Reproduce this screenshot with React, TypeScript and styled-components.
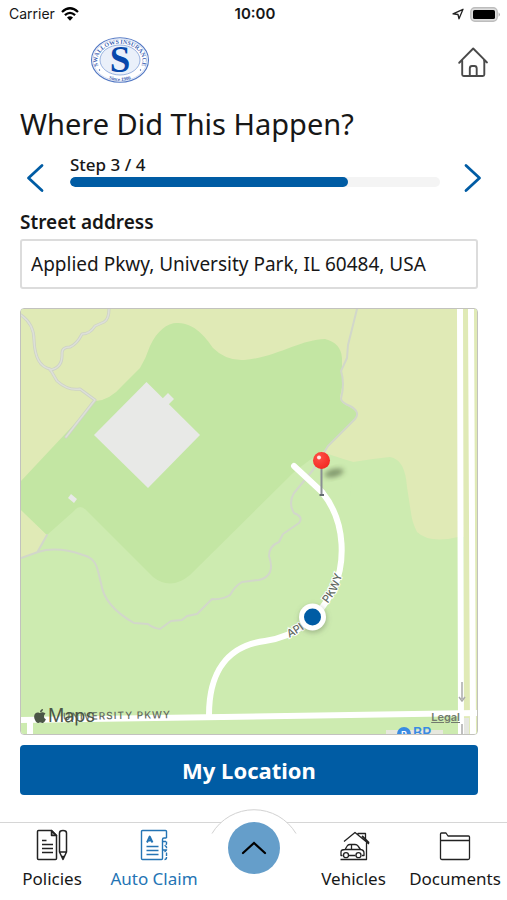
import React, { useState } from "react";
import styled, { createGlobalStyle } from "styled-components";
import { FaApple } from "react-icons/fa";

const BLUE = "#005ca4";
const INK = "#171717";

const GlobalStyle = createGlobalStyle`
  * { box-sizing: border-box; }
  body {
    margin: 0;
    background: #fff;
    color: ${INK};
    font-family: "Noto Sans", sans-serif;
  }
  button, input { font-family: inherit; color: inherit; }
  svg { display: block; }
`;

const Page = styled.div`
  display: flex;
  flex-direction: column;
  min-height: 100vh;
`;

const StatusBar = styled.div`
  display: grid;
  grid-template-columns: 1fr auto 1fr;
  align-items: center;
  height: 28px;
  padding: 0 6px 0 9px;
  font: 400 14px/20px Inter, sans-serif;
`;

const StatusSide = styled.div<{ $end?: boolean }>`
  display: flex;
  align-items: center;
  gap: 6px;
  justify-content: ${(p) => (p.$end ? "flex-end" : "flex-start")};
`;

const Clock = styled.span`
  font-size: 15px;
  font-weight: 600;
`;

const Header = styled.header`
  display: flex;
  align-items: center;
  justify-content: space-between;
  height: 68px;
  padding: 0 18px 4px 90px;
`;

const IconButton = styled.button`
  display: flex;
  padding: 0;
  border: 0;
  background: none;
  cursor: pointer;
`;

const Main = styled.main`
  display: flex;
  flex-direction: column;
  padding: 8px 29px 0 20px;
`;

const Title = styled.h1`
  margin: 0;
  font-size: 29px;
  font-weight: 400;
  line-height: 40px;
`;

const Stepper = styled.div`
  display: flex;
  align-items: center;
  justify-content: space-between;
  gap: 20px;
  height: 48px;
  margin: 10px -12px 0 0;
`;

const StepInfo = styled.div`
  display: flex;
  flex: 1;
  flex-direction: column;
  margin-bottom: 16px;
`;

const StepLabel = styled.span`
  font-size: 17px;
  font-weight: 500;
  line-height: 24px;
`;

const Track = styled.div`
  height: 10px;
  border-radius: 5px;
  background: #f4f4f4;
  overflow: hidden;
`;

const Fill = styled.div`
  height: 100%;
  border-radius: 5px;
  background: ${BLUE};
`;

const FieldLabel = styled.label`
  margin-top: 5px;
  font-size: 19px;
  font-weight: 600;
  line-height: 30px;
`;

const AddressInput = styled.input`
  width: 100%;
  height: 50px;
  margin-top: 2px;
  padding: 0 9px;
  border: 2px solid #dcdcdc;
  border-radius: 3px;
  background: #fff;
  font-size: 19px;
  outline: none;
`;

const MapFrame = styled.section`
  position: relative;
  margin-top: 19px;
  border: 1px solid #c2c2be;
  border-radius: 4px;
  overflow: hidden;
`;

const MapArt = styled.svg`
  width: 100%;
  height: auto;
`;

const MapBrand = styled.div`
  position: absolute;
  left: 11px;
  bottom: 7px;
  display: flex;
  align-items: center;
  color: #4b5646;
  font: 400 18px/22px Inter, sans-serif;
`;

const LegalLink = styled.a`
  position: absolute;
  right: 17px;
  bottom: 10px;
  color: #727b6d;
  font: 600 11px/14px Inter, sans-serif;
`;

const PrimaryButton = styled.button`
  height: 50px;
  margin-top: 10px;
  border: 0;
  border-radius: 4px;
  background: ${BLUE};
  color: #fff;
  font-size: 22px;
  font-weight: 700;
  cursor: pointer;
`;

const TabBar = styled.nav`
  position: relative;
  display: grid;
  grid-template-columns: 104fr 100fr 100fr 99fr 104fr;
  height: 78px;
  margin-top: auto;
  border-top: 1px solid #d6d6d6;
  background: #fff;
`;

const Tab = styled.a<{ $active?: boolean }>`
  display: flex;
  flex-direction: column;
  align-items: center;
  gap: 5px;
  padding-top: 5px;
  color: ${(p) => (p.$active ? "#2474b4" : INK)};
  font-size: 17px;
  line-height: 24px;
  text-decoration: none;
  white-space: nowrap;
`;

const Arch = styled.svg`
  position: absolute;
  left: 50%;
  top: -15px;
  margin-left: -43px;
`;

const ExpandButton = styled.button`
  position: relative;
  display: flex;
  align-items: center;
  justify-content: center;
  justify-self: center;
  width: 52px;
  height: 52px;
  margin-top: -1px;
  padding: 0;
  border: 0;
  border-radius: 50%;
  background: #659eca;
  color: #000;
  cursor: pointer;
`;

const Wifi = () => (
  <svg width="18" height="14" viewBox="0 0 18 14" fill="none" stroke="#000" strokeWidth="2.3" aria-label="Wi-Fi">
    <path d="M1 5Q9-2.4 17 5" />
    <path d="M3.9 8.2Q9 3.6 14.1 8.2" />
    <path d="M6 10.6Q9 8 12 10.6L9 13.8Z" fill="#000" stroke="none" />
  </svg>
);

const LocationArrow = () => (
  <svg width="12" height="12" viewBox="0 0 12 12" fill="none" stroke="#222" strokeWidth="1.3" strokeLinejoin="round" aria-hidden="true">
    <path d="M1 5.8 11 1.3 7 10.8 6 6.5Z" />
  </svg>
);

const Battery = () => (
  <svg width="31" height="15" viewBox="0 0 31 15" aria-label="Battery full">
    <rect x=".8" y=".8" width="26.4" height="13.4" rx="4" fill="#dedede" stroke="#bdbdbd" strokeWidth="1.4" />
    <rect x="3" y="3" width="22" height="9" rx="1.6" fill="#000" />
    <path d="M28.6 5.2q2.6 2.3 0 4.6Z" fill="#aaa" />
  </svg>
);

const Logo = () => (
  <svg width="60" height="48" viewBox="0 0 60 48" role="img" aria-label="Swallows Insurance">
    <defs>
      <path id="logo-top" d="M8 28.500A22.500 17.200 0 1 1 52 28.500" />
      <path id="logo-bottom" d="M10 36.500A24.500 20 0 0 0 50 36.500" />
    </defs>
    <ellipse cx="30" cy="24" rx="28.500" ry="22.300" fill="#fff" stroke="#5479c4" strokeWidth="1.100" />
    <ellipse cx="30" cy="24" rx="27" ry="21" fill="none" stroke="#b8c8e8" strokeWidth=".6" />
    <ellipse cx="30" cy="24" rx="20" ry="15" fill="#eaf0fa" stroke="#829fd7" strokeWidth=".8" />
    <g fill="#3d63b3" fontFamily="Liberation Serif, serif" fontWeight="700" textAnchor="middle">
      <text fontSize="6"><textPath href="#logo-top" startOffset="50%">SWALLOWS INSURANCE</textPath></text>
      <text fontSize="5"><textPath href="#logo-bottom" startOffset="50%">Since 1906</textPath></text>
      <text x="30" y="36" fontSize="37" fill="#0848ab">S</text>
    </g>
    <circle cx="9.500" cy="34" r=".7" fill="#3d63b3" />
    <circle cx="50.500" cy="34" r=".7" fill="#3d63b3" />
  </svg>
);

const HomeIcon = () => (
  <svg width="32" height="36" viewBox="0 -4 32 36" fill="none" stroke="#4a4a4a" strokeWidth="1.900" strokeLinejoin="round" strokeLinecap="round" aria-hidden="true">
    <path d="M4.800 14.500 2.200 16.800M2.200 16.600 16.200 2.500 30 16.400 27.200 14.500" />
    <path d="M5.200 14.500V28.500Q5.200 30 6.700 30H25.800Q27.300 30 27.300 28.500V14.500" />
    <path d="M12.800 30V22.500Q12.800 20 15 20H17.500Q19.700 20 19.700 22.500V30" />
  </svg>
);

const Chevron = ({ flip }: { flip?: boolean }) => (
  <svg width="30" height="30" viewBox="0 0 30 30" fill="none" stroke={BLUE} strokeWidth="2.800" strokeLinecap="round" strokeLinejoin="round" aria-hidden="true">
    <path d={flip ? "M6 2.500 19.500 15 6 27.500" : "M22 2.500 8.500 15 22 27.500"} />
  </svg>
);

const PoliciesIcon = () => (
  <svg width="34" height="34" viewBox="0 0 34 34" fill="none" stroke="#222" strokeWidth="1.500" strokeLinejoin="round" aria-hidden="true">
    <path d="M3.500 2.500H16.500L21.500 7.500V30.500Q21.500 31.500 20.500 31.500H3.500Q2.500 31.500 2.500 30.500V3.500Q2.500 2.500 3.500 2.500Z" />
    <path d="M16.500 2.500V7.500H21.500Z" fill="#222" fillOpacity=".5" />
    <path d="M7 12.500H11.500M7 16.500H18M7 20.500H18M7 24.500H18" />
    <path d="M24.500 5Q24.500 2.500 28 2.500T31.500 5V24L28 31.500 24.500 24ZM24.500 24H31.500M27 28.500H29L28 31Z" />
  </svg>
);

const ClaimIcon = () => (
  <svg width="34" height="34" viewBox="0 0 34 34" fill="none" stroke="#2474b4" strokeWidth="1.400" strokeLinejoin="round" aria-hidden="true">
    <path d="M29.500 10V3.500Q29.500 2.500 28.500 2.500H5.500Q4.500 2.500 4.500 3.500V30.500Q4.500 31.500 5.500 31.500H24.500Q25.500 31.500 25.500 30.500V11.500Q25.500 10 27 10H29.500" />
    <path d="M29.500 13.500V16L28 17.500 29.500 19V22L28 23.500 29.500 25V29.500Q29.500 31.500 27.500 31.500M25.500 13.500H29.500M25.500 22H29.500" strokeDasharray="3.500 1" />
    <path d="M9.500 18.500H21.500M9.500 22.500H21.500M9.500 26.500H21.500" strokeWidth="1.600" />
    <path d="M10 14.500 12.700 8.500 15.500 14.500M11 12.500H14.500" strokeWidth="1.900" />
  </svg>
);

const VehiclesIcon = () => (
  <svg width="34" height="34" viewBox="0 0 34 34" fill="none" stroke="#222" strokeWidth="1.300" strokeLinejoin="round" aria-hidden="true">
    <path d="M7 13.500 18 4.500 32 16M21 6.500V5.500H28.500V13M29.500 14.500V31.500H3.500" />
    <path d="M5.500 27.500H4V24Q4 21.500 8 21.500L10.500 17.500Q11.500 16.500 13 16.500H18Q20 16.500 21 18L23.500 21.500Q27 22 27 25V27.500H25M12 27.500H18.500M8 21.500H23.500M14.500 16.500V21.500" />
    <circle cx="9" cy="27.200" r="2.500" />
    <circle cx="21.500" cy="27.200" r="2.500" />
    <path d="M25 8 32 15" strokeWidth="1.800" />
  </svg>
);

const DocumentsIcon = () => (
  <svg width="34" height="34" viewBox="0 0 34 34" fill="none" stroke="#222" strokeWidth="1.300" strokeLinejoin="round" aria-hidden="true">
    <path d="M2.500 7V6Q2.500 5 3.500 5H8L10 8H30.500Q31.500 8 31.500 9V30Q31.500 31.500 30 31.500H4Q2.500 31.500 2.500 30ZM2.500 12.500H31.500" />
  </svg>
);

const MapDrawing = () => (
  <MapArt viewBox="21 309 456 425" role="img" aria-label="Map of Applied Pkwy">
    <defs>
      <radialGradient id="pin-head" cx=".35" cy=".3" r=".8">
        <stop offset="0" stopColor="#ff5148" />
        <stop offset="1" stopColor="#f2261f" />
      </radialGradient>
      <filter id="soft" x="-50%" y="-50%" width="200%" height="200%">
        <feGaussianBlur stdDeviation="2.500" />
      </filter>
      <path id="pkwy-curve" d="M289 638Q306 630 317 617T334 595 346 560" />
    </defs>
    <rect x="21" y="309" width="456" height="425" fill="#cdebb0" />
    <path fill="#e0eab6" d="M21 309H477V734H464V537H458Q430 544 417 532 412 522 411 513L407 487Q405 459 390 457 370 459 353 462L325 456 100 480 21 482ZM21 510 47 535 38 552 21 558Z" />
    <path fill="#c3e6a3" d="M21 481 96 401Q110 400 123 385L140 368Q146 358 150 346C157 331 167 323 177 323C193 322 206 337 213 348Q226 361 244 360C274 358 302 339 325 339Q341 343 342 358L342 370 343 383 340 397Q340 403 350 407 362 413 354 421L325 450Q310 459 293 473L190 575Q171 591 153 577L87 511Q80 503 74 511L47 535 21 510Z" />
    <path fill="#cdebb0" d="M323 452Q330 455 353 462L350 500 290 480Z" />
    <g fill="#e8e9e7">
      <path d="M146.500 382 200 435 148 488 94 435Z" />
      <path d="M168 393 174 399 168 405 162 399ZM71 494 77 499 74 503 68 498Z" />
    </g>
    <g fill="none" strokeLinejoin="round" strokeLinecap="round">
      <g stroke="#cdd1c6" strokeWidth="3">
        <path d="M21 315Q34 324 34 340 35 366 50 369L57 381Q68 391 80 389L95 400 66 437" />
        <path d="M109 309Q109 319 104 322L95 326Q90 334 82 334 77 344 70 347 62 347 62 353 63 368 50 370" />
      </g>
      <g stroke="#dde0d8" strokeWidth="1.500">
        <path d="M21 315Q34 324 34 340 35 366 50 369L57 381Q68 391 80 389L95 400 66 437" />
        <path d="M109 309Q109 319 104 322L95 326Q90 334 82 334 77 344 70 347 62 347 62 353 63 368 50 370" />
      </g>
      <g stroke="#d2d7ca" strokeWidth="2">
        <path d="M357 309 348 345 347 358 341 371Q345 383 341 399 342 403 350 406 361 412 355 419L328 446 313 470 294 493Q288 503 294 513 304 517 299 523L283 534 279 542Q269 546 269 556 276 576 259 580L242 582Q235 586 230 595 222 600 212 599L197 614 187 616 182 620 171 621 160 629Q153 628 148 624L134 623Q104 606 101 583C97 569 98 559 83 555Q57 546 38 552L21 558M38 551 47 535" />
      </g>
      <g stroke="#fff">
        <path strokeWidth="6" d="M21 720 477 713" />
        <path strokeWidth="6" d="M30 720V734M460 309 461 734M471 309 473 734" />
        <path strokeWidth="6" d="M294 466 322 492C348 524 344 566 334 588Q312 634 265 641C226 646 209 674 209 715" />
      </g>
    </g>
    <path d="M464 718H469V734H464Z" fill="#e5e7e1" />
    <path d="M462 682V699M459 697 462 701 465 697M462 724V734" fill="none" stroke="#aaa" strokeWidth="1.500" />
    <rect x="386" y="730" width="57" height="4" fill="#e7e8de" />
    <g fill="#626a5f" fontFamily="Inter, sans-serif" fontWeight="500">
      <text x="63" y="720" fontSize="10" letterSpacing="1" transform="rotate(-1 63 720)">UNIVERSITY PKWY</text>
      <text fontSize="11" stroke="#fff" strokeWidth="2" paintOrder="stroke"><textPath href="#pkwy-curve">API</textPath></text>
      <text fontSize="11" stroke="#fff" strokeWidth="2" paintOrder="stroke"><textPath href="#pkwy-curve" startOffset="52">PKWY</textPath></text>
    </g>
    <circle cx="404" cy="734" r="7" fill="#398be3" />
    <g fill="#398be3" fontFamily="Inter, sans-serif" fontWeight="600">
      <text x="413" y="738" fontSize="14">BP</text>
      <text x="401" y="738" fontSize="9" fill="#fff">P</text>
    </g>
    <circle cx="313" cy="619" r="14" fill="#64745a" fillOpacity=".4" filter="url(#soft)" />
    <circle cx="312.500" cy="617" r="13.500" fill="#fff" />
    <circle cx="312.500" cy="617" r="8.500" fill={BLUE} />
    <ellipse cx="334" cy="473" rx="10" ry="4" fill="#36452c" fillOpacity=".5" filter="url(#soft)" transform="rotate(-14 334 473)" />
    <path d="M321.500 468V494" stroke="#8a8f93" strokeWidth="2" />
    <path d="M319.500 495H324" stroke="#646b70" strokeWidth="2" />
    <circle cx="321.500" cy="460.500" r="8.500" fill="url(#pin-head)" />
    <circle cx="319" cy="457.500" r="2" fill="#fff" fillOpacity=".85" />
  </MapArt>
);

export default function App() {
  const [address, setAddress] = useState("Applied Pkwy, University Park, IL 60484, USA");
  const step = 3;
  const total = 4;
  return (
    <>
      <GlobalStyle />
      <Page>
        <StatusBar>
          <StatusSide>Carrier <Wifi /></StatusSide>
          <Clock>10:00</Clock>
          <StatusSide $end><LocationArrow /><Battery /></StatusSide>
        </StatusBar>
        <Header>
          <Logo />
          <IconButton aria-label="Home"><HomeIcon /></IconButton>
        </Header>
        <Main>
          <Title>Where Did This Happen?</Title>
          <Stepper>
            <IconButton aria-label="Previous step"><Chevron /></IconButton>
            <StepInfo>
              <StepLabel id="step-label">Step {step} / {total}</StepLabel>
              <Track role="progressbar" aria-labelledby="step-label" aria-valuenow={step} aria-valuemin={0} aria-valuemax={total}>
                <Fill style={{ width: `${(step / total) * 100}%` }} />
              </Track>
            </StepInfo>
            <IconButton aria-label="Next step"><Chevron flip /></IconButton>
          </Stepper>
          <FieldLabel htmlFor="street">Street address</FieldLabel>
          <AddressInput id="street" type="text" value={address} onChange={(e) => setAddress(e.target.value)} />
          <MapFrame>
            <MapDrawing />
            <MapBrand><FaApple size={16} aria-label="Apple" />Maps</MapBrand>
            <LegalLink href="#legal">Legal</LegalLink>
          </MapFrame>
          <PrimaryButton>My Location</PrimaryButton>
        </Main>
        <TabBar>
          <Tab href="#policies"><PoliciesIcon />Policies</Tab>
          <Tab href="#claim" $active aria-current="page"><ClaimIcon />Auto Claim</Tab>
          <Arch width="86" height="27" viewBox="0 0 86 27" fill="#fff" stroke="#d2d2d2" aria-hidden="true">
            <path d="M1 25.500A49 49 0 0 1 85 25.500" />
          </Arch>
          <ExpandButton aria-label="More options">
            <svg width="26" height="16" viewBox="0 0 26 16" fill="none" stroke="currentColor" strokeWidth="2.200" strokeLinecap="round" aria-hidden="true">
              <path d="M2 13 13 3 24 13" />
            </svg>
          </ExpandButton>
          <Tab href="#vehicles"><VehiclesIcon />Vehicles</Tab>
          <Tab href="#documents"><DocumentsIcon />Documents</Tab>
        </TabBar>
      </Page>
    </>
  );
}
